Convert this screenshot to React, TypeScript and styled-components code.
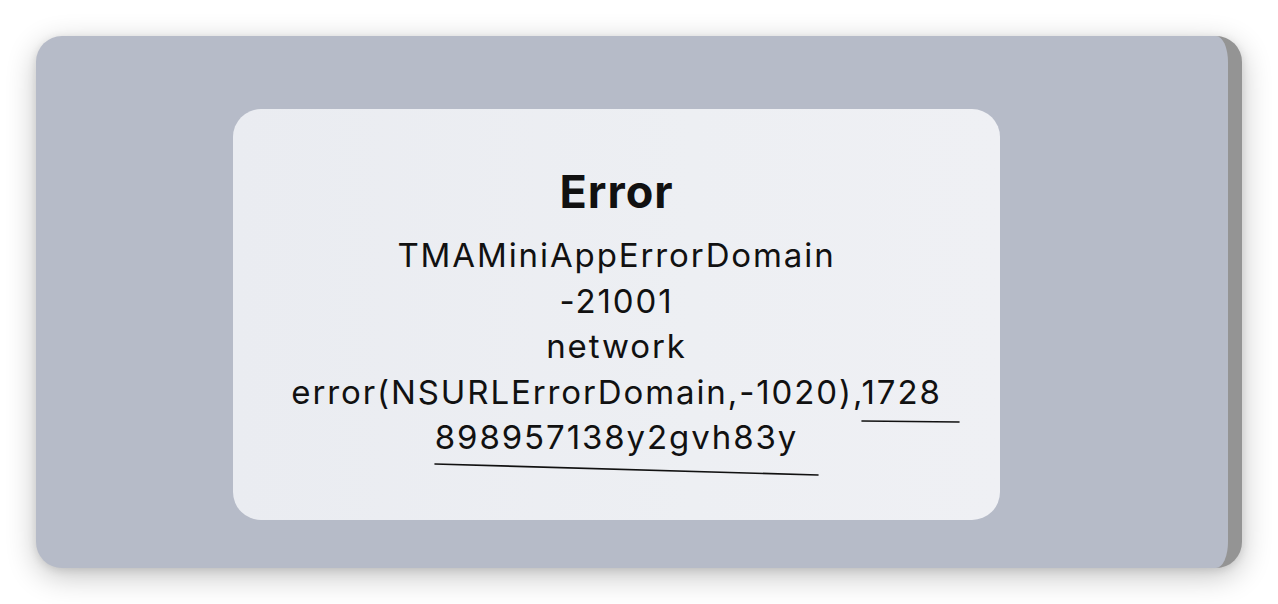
import React from "react";
import styled, { createGlobalStyle } from "styled-components";

const Global = createGlobalStyle`
  html, body { margin: 0; padding: 0; background: #ffffff; }
  body { font-family: Inter, "Noto Sans", "Liberation Sans", sans-serif; }
`;

const Page = styled.div`
  width: 1278px;
  height: 604px;
  padding: 36px 0 0 36px;
  box-sizing: border-box;
`;

const Panel = styled.div`
  position: relative;
  width: 1206px;
  height: 532px;
  box-sizing: border-box;
  background: #b6bbc8;
  border-right: 14px solid #949494;
  border-radius: 26px;
  box-shadow: 0 8px 30px rgba(0, 0, 0, 0.24), 0 2px 8px rgba(0, 0, 0, 0.1);
  padding: 73px 0 0 197px;
`;

const Card = styled.div`
  width: 767px;
  height: 411px;
  box-sizing: border-box;
  border-radius: 28px;
  background: linear-gradient(90deg, #eaecf1 0%, #edeff3 60%, #eff0f4 100%);
  display: flex;
  flex-direction: column;
  align-items: center;
  padding-top: 57px;
  color: #111111;
`;

const Title = styled.h1`
  margin: 0;
  font-size: 45px;
  line-height: 52px;
  font-weight: 700;
  letter-spacing: 1px;
`;

const Message = styled.div`
  margin-top: 15px;
  font-size: 33px;
  line-height: 45.5px;
  font-weight: 400;
  text-align: center;
  letter-spacing: 1.9px;
`;

const Line = styled.div`
  white-space: nowrap;
`;

const Annotation = styled.svg`
  position: absolute;
  left: 0;
  top: 0;
  pointer-events: none;
`;

const lines = [
  "TMAMiniAppErrorDomain",
  "-21001",
  "network",
  "error(NSURLErrorDomain,-1020),1728",
  "898957138y2gvh83y",
];

export default function App() {
  return (
    <>
      <Global />
      <Page>
        <Panel>
          <Card>
            <Title>Error</Title>
            <Message>
              {lines.map((l) => (
                <Line key={l}>{l}</Line>
              ))}
            </Message>
          </Card>
          <Annotation width="1206" height="532" viewBox="36 36 1206 532">
            <path d="M862 421 L959 422" stroke="#111" strokeWidth="1.6" fill="none" strokeLinecap="round" />
            <path d="M435 464 L818 475" stroke="#111" strokeWidth="1.6" fill="none" strokeLinecap="round" />
          </Annotation>
        </Panel>
      </Page>
    </>
  );
}
